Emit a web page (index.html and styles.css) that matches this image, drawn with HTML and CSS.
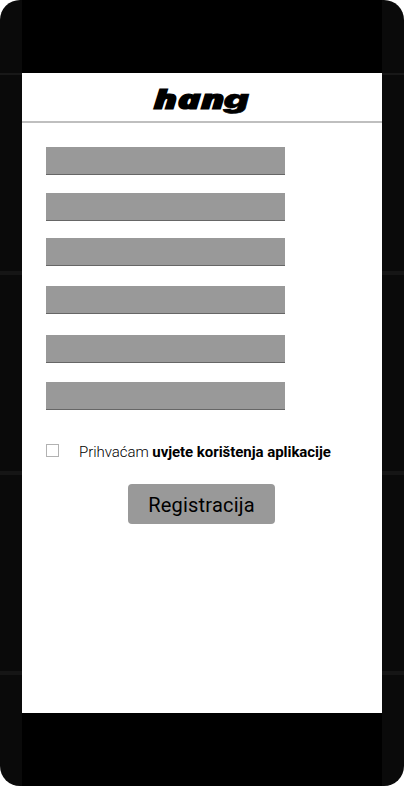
FILE: index.html
```html
<!DOCTYPE html>
<html lang="hr">
<head>
<meta charset="utf-8">
<title>hang</title>
<link rel="stylesheet" href="styles.css">
</head>
<body>
<div class="phone">
  <main class="screen">
    <header class="header">
      <svg class="logo" width="100" height="34" viewBox="0 0 100 34"><text x="1.6" y="24" textLength="71" lengthAdjust="spacingAndGlyphs">han</text><text class="tail" x="71.5" y="22.8" textLength="25.5" lengthAdjust="spacingAndGlyphs">g</text></svg>
    </header>
    <form class="form">
      <div class="fields">
        <input class="field" type="text">
        <input class="field" type="text">
        <input class="field" type="text">
        <input class="field" type="text">
        <input class="field" type="text">
        <input class="field" type="text">
      </div>
      <label class="terms"><input class="check" type="checkbox"><span class="terms-text">Prihvaćam <b>uvjete korištenja aplikacije</b></span></label>
      <button class="submit" type="button">Registracija</button>
    </form>
  </main>
</div>
</body>
</html>
```
FILE: styles.css
```css
* { box-sizing: border-box; }
body { margin: 0; background: #fff; font-family: Roboto, sans-serif; color: #000; }
.phone {
  height: 786px;
  padding: 73px 22px;
  border-radius: 20px;
  background:
    linear-gradient(#000, #000) 22px 0 / 360px 100% no-repeat,
    linear-gradient(#181818, #181818) 0 73px / 100% 2px no-repeat,
    linear-gradient(#151515, #151515) 0 271px / 100% 4px no-repeat,
    linear-gradient(#151515, #151515) 0 471px / 100% 4px no-repeat,
    linear-gradient(#151515, #151515) 0 671px / 100% 4px no-repeat,
    #0a0a0a;
}
.screen { height: 640px; background: #fff; }
.header { height: 50px; padding: 12px 0 0 130px; border-bottom: 2px solid #bfbfbf; }
.logo { display: block; overflow: visible; }
.logo text { font: italic 800 26px "Open Sans", sans-serif; stroke: #000; stroke-width: 1.2px; }
.logo .tail { font: italic 900 26px Inter, sans-serif; stroke-width: 0.6px; }
.form { padding: 24px; }
.fields { display: grid; grid-template-rows: 46px 45px 48px 49px 47px 28px; width: 239px; }
.field { width: 100%; height: 28px; margin: 0; padding: 4px 6px; border: 0; border-bottom: 1px solid #666; border-radius: 0; background: #999; }
.terms { display: flex; align-items: flex-start; gap: 20px; height: 20px; margin-top: 31px; }
.check { appearance: none; width: 13px; height: 13px; margin: 3px 0 0; border: 1px solid #b2b2b2; background: #fff; }
.terms-text { padding-top: 1px; font-size: 15px; font-weight: 300; line-height: 20px; letter-spacing: -0.05px; white-space: nowrap; }
.terms-text b { font-weight: 700; }
.submit { display: block; width: 147px; height: 40px; margin: 23px 0 0 82px; padding: 2px 0 0; border: 0; border-radius: 4px; background: #999; font: 400 20px Roboto, sans-serif; letter-spacing: 0.2px; color: #000; }
```
